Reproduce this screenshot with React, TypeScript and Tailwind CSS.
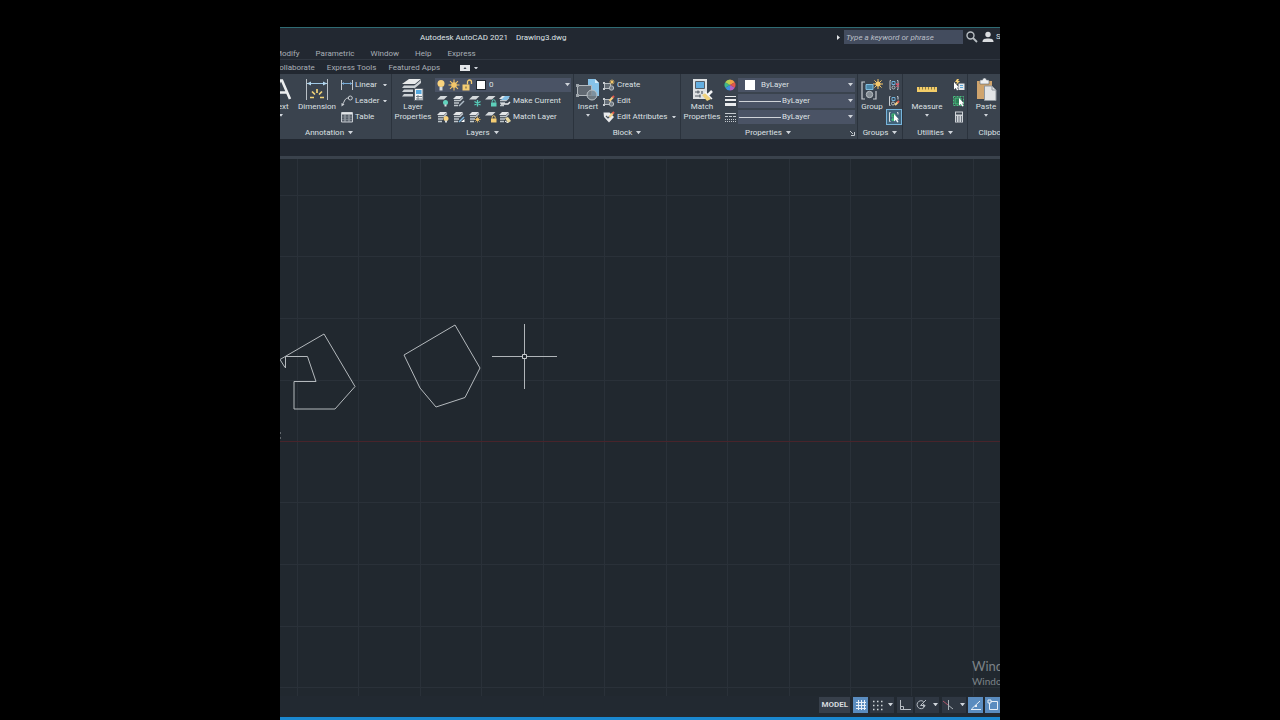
import React from 'react';

const Caret = ({ className = 'w-1.5' }: { className?: string }) => (
  <svg viewBox="0 0 6 4" className={`${className} shrink-0`} fill="#cfd4da" aria-hidden="true">
    <path d="M0 0h6L3 4z" />
  </svg>
);

const Icon = ({ size = 'size-3', children, box = 12 }: { size?: string; children: React.ReactNode; box?: number }) => (
  <svg viewBox={`0 0 ${box} ${box}`} className={`${size} shrink-0`} fill="none" aria-hidden="true">
    {children}
  </svg>
);

/* ---------- icons ---------- */

const Sheets = () => (
  <>
    <path d="M3 1h7L7 4H0z" fill="#e3e6e8" />
    <path d="M1 5.500h6l3-3M1 8h5M1 10.500h4" stroke="#bfc6cb" strokeWidth="1.300" />
  </>
);

const Sheet = () => <path d="M3.500 1h7L7 4.500H0z" fill="#d3d8db" />;

const Sun = ({ x, y, r }: { x: number; y: number; r: number }) => (
  <g transform={`translate(${x} ${y}) scale(${r})`}>
    <circle r=".5" fill="#f7cd72" />
    <path
      d="M0-1V1M-1 0H1M-.72-.72.72.72M-.72.72.72-.72"
      stroke="#f2c568"
      strokeWidth=".2"
    />
  </g>
);

const Bulb = ({ x, y, color = '#f9d37e' }: { x: number; y: number; color?: string }) => (
  <g transform={`translate(${x} ${y})`}>
    <circle cx="0" cy="0" r="2.5" fill={color} />
    <path d="M-1 2h2v2h-2z" fill="#d8dde0" />
  </g>
);

const Cursor = () => <path d="M6 3v7.5l1.8-1.5 1.4 2.6 1.3-.7-1.3-2.5H11z" fill="#fff" />;

const LinearIcon = () => (
  <Icon>
    <path d="M.5 1v10M11.5 1v10" stroke="#c3c8cd" />
    <path d="M1 4.5h10" stroke="#77abd6" />
    <path d="M1 4.5l2-1.5v3zM11 4.5L9 3v3z" fill="#77abd6" />
  </Icon>
);

const LeaderIcon = () => (
  <Icon>
    <circle cx="9.3" cy="3" r="2" stroke="#c9ced3" />
    <path d="M7.3 3C4 3 3.500 6 1.500 10" stroke="#c9ced3" />
    <path d="M.5 11.500V8l3 1.500z" fill="#c9ced3" />
  </Icon>
);

const TableIcon = () => (
  <Icon>
    <path d="M.5 1.500h11v9.500H.5z" fill="#565e69" stroke="#c5cad0" />
    <path d="M1 2.500h10" stroke="#e1e4e7" strokeWidth="2" />
    <path d="M4 3v8M8 3v8" stroke="#aab1b8" />
    <path d="M1 6h10M1 8.500h10" stroke="#8b939c" strokeWidth=".6" />
  </Icon>
);

const DimensionIcon = () => (
  <Icon size="size-6" box={24}>
    <path d="M1.500 1v21M22.500 1v21" stroke="#b9c0c6" />
    <path d="M2 5.500h20" stroke="#9fc8e6" />
    <path d="M2 5.500L6 3.500v4zM22 5.500l-4-2v4z" fill="#b5d7ee" />
    <path d="M5 19.500h4M15 19.500h4M7 13.500l3 3M17 13.500l-3 3M12 11v4" stroke="#f1d377" strokeWidth="1.700" />
  </Icon>
);

const LayerPropertiesIcon = () => (
  <Icon size="size-6" box={24}>
    <path d="M8 1h12l-6 5H1z" fill="#e8eaeb" />
    <path d="M14 7l6-5v3l-6 5H1l2-2.500h10zM1 14l2-2.500h9V14zM1 18.500L3 16h9v2.500z" fill="#ccd1d5" />
    <path d="M13.500 10.500h8.500v12h-8.500z" fill="#f0f2f3" stroke="#59626c" />
    <path d="M15 12h5.500v4H15z" fill="#55a9df" />
    <path d="M15 18.500h6M15 21h6M17 17v5" stroke="#727c86" />
  </Icon>
);

const InsertIcon = () => (
  <Icon size="size-6" box={24}>
    <path d="M12 1h7l4 4v13H12z" fill="#86c3ea" />
    <path d="M19 1v4h4z" fill="#d5ebf8" />
    <path d="M1.500 7.500h14v10h-14z" fill="#616972" stroke="#b3b9be" />
    <circle cx="16" cy="17" r="5" fill="#7b848c" fillOpacity=".8" stroke="#b9c0c5" />
    <path d="M0 6h3v3H0zM0 16h3v3H0z" fill="#9da4aa" />
  </Icon>
);

const MatchPropertiesIcon = () => (
  <Icon size="size-6" box={24}>
    <path d="M3 1h14v20H3z" fill="#dfe2e4" />
    <path d="M5.500 3.500h9v7h-9z" fill="#63aee0" stroke="#555e68" />
    <path d="M5 14h5M5 18h5M12 13v3M8 12.500v3M10 16.500v3" stroke="#525b65" strokeWidth="1.200" />
    <path d="M12 17l4-2 5 6-4 2z" fill="#f0d27c" />
    <path d="M18 17l4-4" stroke="#f5f6f6" strokeWidth="2.500" />
    <path d="M15 14l7 7" stroke="#f5f6f6" strokeWidth="1.500" />
  </Icon>
);

const GroupIcon = () => (
  <Icon size="size-6" box={24}>
    <path d="M5 4H2v17h3M13 21h3v-8" stroke="#c6cbd0" strokeWidth="1.200" />
    <path d="M6 6.500h7v5H6z" fill="#4a86a8" stroke="#82bfe0" />
    <circle cx="9.500" cy="16.500" r="3.200" fill="#858d94" stroke="#b9bfc4" />
    <Sun x={18} y={6} r={5} />
  </Icon>
);

const MeasureIcon = () => (
  <Icon size="size-6" box={24}>
    <path d="M2 9h20v5H2z" fill="#f3cd68" />
    <path d="M4.500 9v2.500M7.500 9v2.500M10.500 9v2.500M13.500 9v2.500M16.500 9v2.500M19.500 9v2.500" stroke="#8c7b46" />
  </Icon>
);

const PasteIcon = () => (
  <Icon size="size-6" box={24}>
    <path d="M3 3h15v18H3z" fill="#cfa46d" />
    <path d="M6 2h2.500a2 2 0 0 1 4 0H15v4H6z" fill="#eef0f1" stroke="#59626c" strokeWidth=".6" />
    <path d="M10.500 8H18l4 4v10.500H10.500z" fill="#e2e4e6" stroke="#8f969d" />
    <path d="M18 8v4h4" stroke="#8f969d" />
  </Icon>
);

const TextIcon = () => (
  <Icon size="size-6" box={24}>
    <path d="M3 21L11 2.500h2L21 21M6.500 14.500h11" stroke="#eceeef" strokeWidth="2.600" />
  </Icon>
);

const CreateIcon = ({ pencil = false }: { pencil?: boolean }) => (
  <Icon>
    <path d="M1.500 4.500h6v5h-6z" fill="#616a73" stroke="#b8bec3" />
    <circle cx="8.500" cy="9" r="2.200" fill="#737c85" stroke="#b8bec3" />
    <path d="M0 3h2v2H0zM0 9h2v2H0z" fill="#c9ced2" />
    {pencil ? (
      <>
        <path d="M6.500 6L10 2" stroke="#f4cf83" strokeWidth="2" />
        <path d="M9.500 2.500L11 1" stroke="#e2574d" strokeWidth="2" />
      </>
    ) : (
      <Sun x={9} y={3} r={2.8} />
    )}
  </Icon>
);

const AttributesIcon = () => (
  <Icon>
    <path d="M.5 1.500h6L11 6l-5 5.500L1 6z" fill="#e8eaec" />
    <path d="M3 5l2 2 2-2" stroke="#4d5660" strokeWidth="1.200" />
    <path d="M6.500 6L10 2" stroke="#f4cf83" strokeWidth="2" />
    <path d="M9.500 2.500L11 1" stroke="#e2574d" strokeWidth="2" />
  </Icon>
);

const Padlock = ({ color }: { color: string }) => (
  <>
    <path d="M6 7.500h5.500v4H6z" fill={color} />
    <path d="M7.200 7.500V6.300a1.500 1.500 0 0 1 3 0v1.200" stroke={color} />
  </>
);

const layerToolsTop = [
  { name: 'Off', icon: <><Sheet /><Bulb x={8.5} y={7.5} color="#62d3bd" /></> },
  { name: 'Isolate', icon: <><Sheets /><path d="M6 11l5-5" stroke="#aebbc5" strokeWidth="1.5" /></> },
  { name: 'Freeze', icon: <><Sheet /><path d="M8.500 5v6.500M5.500 6.500l6 3.500M5.500 10l6-3.500" stroke="#57cdb9" strokeWidth="1.300" /></> },
  { name: 'Lock', icon: <><Sheet /><Padlock color="#5dd0bb" /></> },
];

const layerToolsBottom = [
  { name: 'Turn All Layers On', icon: <><Sheets /><Bulb x={9} y={7.5} /></> },
  { name: 'Unisolate', icon: <><Sheets /><path d="M6 11l5-5" stroke="#7db6de" strokeWidth="1.500" /><path d="M8 11h3.500V8z" fill="#fff" /></> },
  { name: 'Thaw All Layers', icon: <><Sheets /><Sun x={8.500} y={8.500} r={3.2} /></> },
  { name: 'Unlock', icon: <><Sheet /><Padlock color="#f4cd73" /></> },
];

/* ---------- ribbon parts ---------- */

interface BigButtonProps {
  label: string[];
  icon: React.ReactNode;
  width: string;
  menu?: boolean;
}

const BigButton = ({ label, icon, width, menu }: BigButtonProps) => (
  <button className={`${width} flex h-12 shrink-0 flex-col items-center pt-px leading-[10px] whitespace-nowrap`}>
    {icon}
    {label.map((line) => (
      <span key={line}>{line}</span>
    ))}
    {menu && <Caret className="mt-0.5 w-1" />}
  </button>
);

interface SmallButtonProps {
  label: string;
  icon: React.ReactNode;
  menu?: boolean;
}

const SmallButton = ({ label, icon, menu }: SmallButtonProps) => (
  <button className="flex h-4 items-center gap-0.5 text-left whitespace-nowrap">
    {icon}
    <span className="flex-1">{label}</span>
    {menu && <Caret className="w-1" />}
  </button>
);

interface PanelProps {
  title: string;
  width: string;
  children: React.ReactNode;
  launcher?: boolean;
  menu?: boolean;
}

const Panel = ({ title, width, children, launcher, menu = true }: PanelProps) => (
  <section className={`${width} flex shrink-0 flex-col border-r border-[#2b333d] pt-[3px]`}>
    <div className="flex h-12">{children}</div>
    <h2 className="flex h-3.5 items-center justify-center gap-1 pt-0.5 whitespace-nowrap">
      {launcher && <span className="flex-1" />}
      {title}
      {menu && <Caret className="w-[5px]" />}
      {launcher && (
        <span className="flex flex-1 justify-end pr-0.5">
          <svg viewBox="0 0 5 5" className="size-[5px]" aria-hidden="true">
            <path d="M0 0l3 3M4.500 1v3.500H1" stroke="#c4c9ce" fill="none" />
          </svg>
        </span>
      )}
    </h2>
  </section>
);

const PropertyCombo = ({ name, children }: { name: string; children: React.ReactNode }) => (
  <div className="my-px flex h-3.5 items-center bg-[#4a5365] pr-0.5">
    {children}
    <select aria-label={name} className="min-w-0 flex-1 appearance-none bg-transparent leading-3 outline-none">
      <option>ByLayer</option>
    </select>
    <Caret className="w-[5px]" />
  </div>
);

const Ribbon = () => (
  <div className="flex h-[65px] shrink-0 overflow-hidden bg-[#3a434e]">
    <div className="-ml-[13px] flex">
      <Panel title="Annotation" width="w-[125px]">
        <BigButton label={['Text']} icon={<TextIcon />} width="w-7" menu />
        <BigButton label={['Dimension']} icon={<DimensionIcon />} width="w-11" />
        <div className="flex flex-1 flex-col pr-1 pl-0.5">
          <SmallButton label="Linear" icon={<LinearIcon />} menu />
          <SmallButton label="Leader" icon={<LeaderIcon />} menu />
          <SmallButton label="Table" icon={<TableIcon />} />
        </div>
      </Panel>

      <Panel title="Layers" width="w-[182px]">
        <BigButton label={['Layer', 'Properties']} icon={<LayerPropertiesIcon />} width="w-[42px]" />
        <div className="flex flex-1 flex-col pr-0.5 pl-px">
          <div className="my-px flex h-3.5 items-center gap-px bg-[#4a5365] pr-px">
            <Icon>
              <circle cx="6" cy="4.500" r="3.500" fill="#f9d37e" />
              <path d="M4.500 8h3v3.500h-3z" fill="#d8dde0" />
            </Icon>
            <Icon><Sun x={6} y={6} r={5.5} /></Icon>
            <Icon>
              <path d="M1.500 5.500h7v6h-7z" fill="#f4cd73" />
              <path d="M6.500 5.500V3a2 2 0 0 1 4 0v2" stroke="#f4cd73" strokeWidth="1.300" />
              <path d="M5 7.500v2" stroke="#5d5640" />
            </Icon>
            <span className="mx-[2px] size-2.5 shrink-0 border border-[#20262d] bg-white" />
            <select aria-label="Current layer" className="min-w-0 flex-1 appearance-none bg-transparent leading-3 outline-none">
              <option>0</option>
            </select>
            <Caret className="w-[5px]" />
          </div>
          <div className="flex">
            {layerToolsTop.map(({ name, icon }) => (
              <button key={name} aria-label={name} className="flex size-4 shrink-0 items-center justify-center">
                <Icon>{icon}</Icon>
              </button>
            ))}
            <SmallButton
              label="Make Current"
              icon={<Icon><Sheets /><path d="M4 3l2-2h5L8 5H2z" fill="#82bfe6" /><path d="M2 9h7l2-2" stroke="#e7eaec" strokeWidth="1.500" /></Icon>}
            />
          </div>
          <div className="flex">
            {layerToolsBottom.map(({ name, icon }) => (
              <button key={name} aria-label={name} className="flex size-4 shrink-0 items-center justify-center">
                <Icon>{icon}</Icon>
              </button>
            ))}
            <SmallButton
              label="Match Layer"
              icon={<Icon><Sheets /><path d="M6 7l3-1 3 4-3 2z" fill="#e9d9a0" /><path d="M6 10l3 2" stroke="#fff" /></Icon>}
            />
          </div>
        </div>
      </Panel>

      <Panel title="Block" width="w-[107px]">
        <BigButton label={['Insert']} icon={<InsertIcon />} width="w-7" menu />
        <div className="flex flex-1 flex-col pr-1 pl-px">
          <SmallButton label="Create" icon={<CreateIcon />} />
          <SmallButton label="Edit" icon={<CreateIcon pencil />} />
          <SmallButton label="Edit Attributes" icon={<AttributesIcon />} menu />
        </div>
      </Panel>

      <Panel title="Properties" width="w-[177px]" launcher>
        <BigButton label={['Match', 'Properties']} icon={<MatchPropertiesIcon />} width="w-[42px]" />
        <div className="flex w-3.5 flex-col items-center">
          <span className="flex h-4 items-center">
            <Icon>
              <path d="M6 6V.5A5.500 5.500 0 0 1 10.800 3.300z" fill="#f0a043" />
              <path d="M6 6l4.800-2.700a5.500 5.500 0 0 1 0 5.400z" fill="#e2564a" />
              <path d="M6 6l4.800 2.700A5.500 5.500 0 0 1 6 11.500z" fill="#b05fc4" />
              <path d="M6 6v5.500a5.500 5.500 0 0 1-4.800-2.800z" fill="#3f8fe0" />
              <path d="M6 6L1.200 8.700a5.500 5.500 0 0 1 0-5.400z" fill="#3fb88a" />
              <path d="M6 6L1.200 3.300A5.500 5.500 0 0 1 6 .5z" fill="#b6cf52" />
            </Icon>
          </span>
          <span className="flex h-4 items-center">
            <Icon><path d="M1 1.500h11" stroke="#e9ebed" /><path d="M1 5h11" stroke="#e9ebed" strokeWidth="2" /><path d="M1 9.500h11" stroke="#e9ebed" strokeWidth="3" /></Icon>
          </span>
          <span className="flex h-4 items-center">
            <Icon>
              <path d="M1 2.500h11" stroke="#c5cacf" />
              <path d="M1 5.500h11" stroke="#c5cacf" strokeDasharray="3 1" />
              <path d="M1 8.500h11M1 10.500h11" stroke="#c5cacf" strokeDasharray="1 1" />
            </Icon>
          </span>
        </div>
        <div className="flex flex-1 flex-col pr-0.5 pl-px">
          <PropertyCombo name="Object color">
            <span className="mr-1.5 ml-[7px] size-2.5 bg-white" />
          </PropertyCombo>
          <PropertyCombo name="Lineweight">
            <span className="mr-px ml-px h-px w-[42px] bg-[#cfd3d8]" />
          </PropertyCombo>
          <PropertyCombo name="Linetype">
            <span className="mr-px ml-px h-px w-[42px] bg-[#cfd3d8]" />
          </PropertyCombo>
        </div>
      </Panel>

      <Panel title="Groups" width="w-[45px]">
        <BigButton label={['Group']} icon={<GroupIcon />} width="w-7" />
        <div className="flex flex-col">
          <button aria-label="Ungroup" className="flex size-4 items-center justify-center">
            <Icon>
              <path d="M3 1.500H2v9h1M9 1.500h1v9H9" stroke="#b9bfc5" />
              <path d="M4 2.500h3v3H4z" stroke="#6fb1da" /><circle cx="5.500" cy="8.500" r="1.500" stroke="#b9bfc5" />
              <path d="M8 4.500l3 3M11 4.500l-3 3" stroke="#e0526a" strokeWidth="1.300" />
            </Icon>
          </button>
          <button aria-label="Group Edit" className="flex size-4 items-center justify-center">
            <Icon>
              <path d="M2.500 1.500h-1v9h1M9 1.500h1v3" stroke="#c9ced3" />
              <path d="M4 2.500h3v3H4z" stroke="#6fb1da" /><circle cx="5" cy="8.500" r="1.500" stroke="#b9bfc5" />
              <path d="M7 10l3-3" stroke="#f4cf83" strokeWidth="2" /><path d="M9.500 7.500l1.500-1.500" stroke="#e2574d" strokeWidth="2" />
            </Icon>
          </button>
          <button aria-label="Group Selection On/Off" className="flex size-4 items-center justify-center border border-[#77b5dc] bg-[#41637a]">
            <Icon>
              <path d="M2.500 1.500h-1v9h1M9 1.500h1v2" stroke="#d9dde0" />
              <path d="M4 3h3v3H4z" stroke="#43c07c" fill="#2c8a5b" /><circle cx="5" cy="8.500" r="1.500" fill="#43c07c" />
              <Cursor />
            </Icon>
          </button>
        </div>
      </Panel>

      <Panel title="Utilities" width="w-[65px]">
        <BigButton label={['Measure']} icon={<MeasureIcon />} width="w-12" menu />
        <div className="flex flex-col">
          <button aria-label="Quick Select" className="flex size-4 items-center justify-center">
            <Icon>
              <path d="M5.500 4.500h6v6.500h-6z" fill="#e4e8eb" /><path d="M7 6.500h3M7 8.500h3" stroke="#5aa5d6" />
              <path d="M1 3v7.500l1.800-1.500 1.200 2.500 1.200-.7L4 8.500h2z" fill="#fff" />
              <path d="M4 0L2 3h2L3 6l4-4H5l1-2z" fill="#f5cf75" />
            </Icon>
          </button>
          <button aria-label="Select All" className="flex size-4 items-center justify-center">
            <Icon>
              <path d="M.5 1.500h10v9H.5z" stroke="#48c07f" strokeDasharray="2 1" />
              <path d="M2 3h6v6H2z" fill="#2d7f57" stroke="#48c07f" />
              <Cursor />
            </Icon>
          </button>
          <button aria-label="Quick Calculator" className="flex size-4 items-center justify-center">
            <Icon>
              <path d="M2 .5h8v11H2z" fill="#d0d4d8" />
              <path d="M3 2.500h6" stroke="#3f4852" strokeWidth="2" />
              <path d="M3.500 5v6M6 5v6M8.500 5v6" stroke="#6a737d" />
            </Icon>
          </button>
        </div>
      </Panel>

      <Panel title="Clipboard" width="w-[56px]" menu={false}>
        <BigButton label={['Paste']} icon={<PasteIcon />} width="w-9" menu />
      </Panel>
    </div>
  </div>
);

const TitleBar = () => (
  <header className="flex h-[18px] shrink-0 items-center overflow-hidden pl-[140px] whitespace-nowrap">
    <h1 className="flex gap-2 pt-px text-[#dfe2e5]">
      <span>Autodesk AutoCAD 2021</span>
      <span>Drawing3.dwg</span>
    </h1>
    <svg viewBox="0 0 3 5" className="mr-1 ml-auto h-[5px] w-[3px] shrink-0" fill="#e3e6e8" aria-hidden="true">
      <path d="M0 0l3 2.500L0 5z" />
    </svg>
    <input
      aria-label="Search"
      placeholder="Type a keyword or phrase"
      className="h-3.5 w-[119px] shrink-0 bg-[#434c5e] px-0.5 italic outline-none placeholder:text-[#b9bec6]"
    />
    <button className="ml-[3px] shrink-0" aria-label="Find">
      <Icon>
        <circle cx="4.500" cy="4.500" r="3.500" stroke="#b9bfc4" strokeWidth="1.400" />
        <path d="M7 7l4 4" stroke="#b9bfc4" strokeWidth="1.800" />
      </Icon>
    </button>
    <button className="ml-1 flex w-[18px] shrink-0 items-center gap-0.5">
      <Icon>
        <circle cx="6" cy="3.500" r="2.700" fill="#d9dcdf" />
        <path d="M.5 11c0-3 2-3.500 5.500-3.500s5.500.5 5.500 3.500z" fill="#d9dcdf" />
      </Icon>
      Sign In
    </button>
  </header>
);

const StatusBar = () => (
  <footer className="flex h-[21px] shrink-0 items-center justify-end gap-0.5 overflow-hidden bg-[#222931] pb-1 text-[#d5d9dd]">
    <button className="mr-px h-4 bg-[#373f4a] px-0.5 font-bold">MODEL</button>
    <button aria-label="Grid" className="flex h-4 w-[15px] items-center justify-center bg-[#5a8cbf]">
      <Icon><path d="M3.500 1v10M6.500 1v10M9.500 1v10M1 3.500h10M1 6.500h10M1 9.500h10" stroke="#e6eef6" /></Icon>
    </button>
    <button aria-label="Snap" className="flex h-4 w-6 items-center gap-1 bg-[#2f3742] pl-0.5">
      <Icon>
        <path d="M1 2.500h10M1 6.500h10M1 10.500h10" stroke="#d0d5da" strokeWidth="1.500" strokeDasharray="1.500 2.500" />
      </Icon>
      <Caret className="w-[5px]" />
    </button>
    <button aria-label="Ortho" className="ml-px flex h-4 w-4 items-center justify-center bg-[#2f3742]">
      <Icon><path d="M1.500 1v9.500H12M1.500 7.500h3v3" stroke="#b7bdc4" /></Icon>
    </button>
    <button aria-label="Polar tracking" className="flex h-4 w-6 items-center gap-1.5 bg-[#2f3742]">
      <Icon>
        <path d="M8.500 2.500a4 4 0 1 0 1.500 4H5.500L11 1" stroke="#b7bdc4" />
        <path d="M8 4.500l2.500 2L8 8.500z" fill="#b7bdc4" />
      </Icon>
      <Caret className="w-[5px]" />
    </button>
    <button aria-label="Isometric drafting" className="ml-px flex h-4 w-6 items-center gap-1.5 bg-[#2f3742]">
      <Icon>
        <path d="M6.500 1v10M6 6l5 4" stroke="#aab1b8" />
        <path d="M1 2l5 4" stroke="#b0566a" />
      </Icon>
      <Caret className="w-[5px]" />
    </button>
    <button aria-label="Object snap tracking" className="flex h-4 w-[15px] items-center justify-center bg-[#5a8cbf]">
      <Icon><path d="M1 10.500h10M1.500 10L10 2" stroke="#e6eef6" /><path d="M5 6h2v2H5z" fill="#e6eef6" /></Icon>
    </button>
    <button aria-label="Object snap" className="flex h-4 w-[15px] items-center justify-center bg-[#5a8cbf]">
      <Icon><path d="M2.500 2.500h8v8h-8z" stroke="#e6eef6" /><path d="M1 1h3v3H1z" stroke="#e6eef6" fill="#5a8cbf" /></Icon>
    </button>
  </footer>
);

const columns = [17, 78, 140, 201, 263, 324, 386, 447, 509, 570, 631, 693];
const gridRows = [36, 97, 159, 221, 343, 405, 467, 528];

const Drawing = () => (
  <main className="relative min-h-0 flex-1 overflow-hidden bg-[#21282f]">
    <svg className="size-full" fill="none" aria-label="Model space">
      <g stroke="#2a3139">
        {columns.map((x) => (
          <path key={x} d={`M${x + 0.5} 0v2000`} />
        ))}
        {gridRows.map((y) => (
          <path key={y} d={`M0 ${y + 0.5}h4000`} />
        ))}
      </g>
      <path d="M0 282.500h4000" stroke="#48242b" />
      <g stroke="#b4b9bd">
        <path d="M5.500 209V197.500H27.500L36 222.500H14V250H55L75 227.500L44 175L0 200.500L5 208.500" />
        <path d="M175 166L200 209L185 238.500L156 248L140 229L124 196z" />
        <path d="M244.500 165v65M212 197.500h65" stroke="#b0b5b9" />
        <path d="M242.500 195.500h4v4h-4z" fill="#21282f" stroke="#c6cacd" />
      </g>
      <path d="M0 273v2M0 278v2" stroke="#a3a8ac" />
    </svg>
    <div className="absolute right-0 bottom-2 w-7 font-['Lato','Open_Sans',sans-serif] whitespace-nowrap text-[#7c8287]">
      <p className="text-[13px] leading-[16px]">Windows</p>
      <p className="text-[10px] leading-[14px]">Windows Settings</p>
    </div>
  </main>
);

const App: React.FC = () => {
  return (
    <div className="h-screen overflow-hidden bg-black">
      <div className="mx-auto flex h-full w-[100vh] max-w-full flex-col pt-[27px] font-['Roboto','Open_Sans',sans-serif] text-[8px] text-[#dde0e3]">
        <div className="flex min-h-0 flex-1 flex-col overflow-hidden border-t border-[#2f6b73] bg-[#222831]">
          <TitleBar />
          <nav aria-label="Menu" className="h-[14px] shrink-0 overflow-hidden border-b border-[#303741] text-[#a9afb6]">
            <div className="-ml-[5px] flex items-center gap-4 leading-[16px]">
              <a href="#modify">Modify</a>
              <a href="#parametric">Parametric</a>
              <a href="#window">Window</a>
              <a href="#help">Help</a>
              <a href="#express">Express</a>
            </div>
          </nav>
          <nav aria-label="Ribbon tabs" className="h-[14px] shrink-0 overflow-hidden text-[#a9afb6]">
            <div className="-ml-[6px] flex items-center gap-3 leading-[16px] whitespace-nowrap">
              <a href="#collaborate">Collaborate</a>
              <a href="#express-tools">Express Tools</a>
              <a href="#featured-apps">Featured Apps</a>
              <button aria-label="Minimize ribbon" className="ml-2 flex items-center gap-1">
                <svg viewBox="0 0 10 6" className="h-1.5 w-2.5" aria-hidden="true">
                  <path d="M0 0h10v6H0z" fill="#e4e7ea" />
                  <path d="M3.500 4h3L5 2z" fill="#3a434f" />
                </svg>
                <Caret className="w-1" />
              </button>
            </div>
          </nav>
          <Ribbon />
          <div className="h-[17px] shrink-0" />
          <div className="h-[3px] shrink-0 bg-[#3a424c]" />
          <Drawing />
          <StatusBar />
          <div className="h-[3px] shrink-0 bg-[#1a87cf]" />
        </div>
      </div>
    </div>
  );
};

export default App;
